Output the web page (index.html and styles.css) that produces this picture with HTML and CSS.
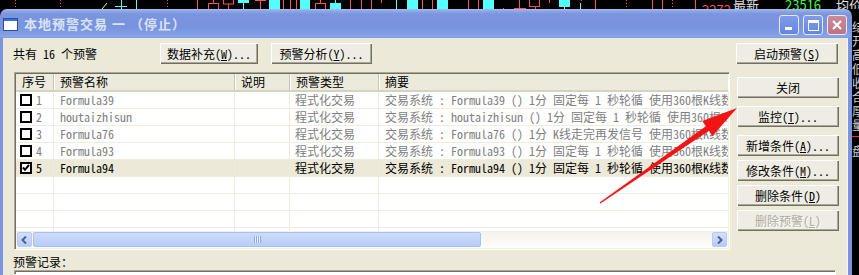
FILE: index.html
```html
<!DOCTYPE html>
<html lang="zh-CN">
<head>
    <meta charset="UTF-8">
    <title>本地预警交易</title>
    <link rel="stylesheet" href="styles.css">
</head>
<body>
    <!-- chart strip behind the dialog -->
    <svg class="chart" width="859" height="9" viewBox="0 0 859 9">
        <g class="dots" stroke="#ff5454" stroke-width="1" stroke-dasharray="1 2">
            <line x1="15.5" y1="0" x2="15.5" y2="9"/>
            <line x1="60.5" y1="0" x2="60.5" y2="9"/>
            <line x1="167.5" y1="0" x2="167.5" y2="9"/>
            <line x1="626.5" y1="0" x2="626.5" y2="9"/>
            <line x1="672.5" y1="0" x2="672.5" y2="9"/>
        </g>
        <line x1="102" y1="9" x2="107" y2="3" stroke="#ffff54"/>
        <g stroke="#54ffff" fill="#54ffff">
            <line x1="121.5" y1="0" x2="121.5" y2="9"/>
            <rect x="115" y="6" width="12" height="1" stroke="none"/>
            <line x1="136.5" y1="0" x2="136.5" y2="9"/>
            <rect x="238" y="0" width="11" height="3" stroke="none"/>
            <line x1="243.5" y1="3" x2="243.5" y2="9"/>
            <rect x="269" y="0" width="11" height="9" stroke="none"/>
            <rect x="300" y="0" width="10" height="9" stroke="none"/>
            <rect x="330" y="3" width="11" height="6" stroke="none"/>
            <line x1="335.5" y1="0" x2="335.5" y2="3"/>
            <line x1="396.5" y1="0" x2="396.5" y2="9"/>
            <rect x="407" y="0" width="11" height="9" stroke="none"/>
            <rect x="437" y="0" width="11" height="9" stroke="none"/>
            <rect x="483" y="0" width="11" height="9" stroke="none"/>
            <rect x="559" y="0" width="11" height="7" stroke="none"/>
            <line x1="564.5" y1="7" x2="564.5" y2="9"/>
            <line x1="580.5" y1="3" x2="580.5" y2="9"/>
        </g>
        <g stroke="#ff5454" fill="none">
            <line x1="197.5" y1="0" x2="197.5" y2="9"/>
            <rect x="208.5" y="3.5" width="10" height="6"/>
            <line x1="213.5" y1="0" x2="213.5" y2="3"/>
            <rect x="223.5" y="-1" width="10" height="5"/>
            <line x1="228.5" y1="4" x2="228.5" y2="9"/>
            <line x1="255" y1="0.5" x2="266" y2="0.5"/>
            <line x1="260.5" y1="0" x2="260.5" y2="9"/>
            <line x1="283.5" y1="0" x2="283.5" y2="9"/>
            <line x1="290.5" y1="0" x2="290.5" y2="9"/>
            <line x1="296.5" y1="0" x2="296.5" y2="9"/>
            <rect x="315.5" y="3.5" width="10" height="6"/>
            <line x1="320.5" y1="0" x2="320.5" y2="3"/>
            <line x1="350.5" y1="0" x2="350.5" y2="9"/>
            <line x1="361.5" y1="0" x2="361.5" y2="9"/>
            <line x1="371.5" y1="0" x2="371.5" y2="9"/>
            <line x1="381.5" y1="0" x2="381.5" y2="3"/>
            <line x1="422.5" y1="0" x2="422.5" y2="9"/>
            <line x1="432.5" y1="0" x2="432.5" y2="9"/>
            <line x1="468.5" y1="0" x2="468.5" y2="9"/>
            <line x1="478.5" y1="0" x2="478.5" y2="9"/>
            <line x1="503.5" y1="8" x2="503.5" y2="9"/>
            <line x1="514" y1="8.5" x2="526" y2="8.5"/>
            <line x1="519.5" y1="0" x2="519.5" y2="8"/>
            <rect x="529.5" y="-1" width="10" height="7.5"/>
            <line x1="535.5" y1="7" x2="535.5" y2="9"/>
            <line x1="549.5" y1="0" x2="549.5" y2="3"/>
            <line x1="581.5" y1="0" x2="581.5" y2="1"/>
            <line x1="595.5" y1="0" x2="595.5" y2="9"/>
            <line x1="652.5" y1="0" x2="652.5" y2="9"/>
            <line x1="662.5" y1="0" x2="662.5" y2="9"/>
            <line x1="695.5" y1="0" x2="695.5" y2="9"/>
        </g>
        <text x="702" y="15" class="q-red">2272</text>
        <text x="733" y="10" class="q-white">最新</text>
        <text x="785" y="10" class="q-green">23516</text>
        <text x="836" y="10" class="q-white">均价</text>
    </svg>

    <div class="screen">
        <div class="window">
            <div class="titlebar">
                <svg class="app-icon" width="15" height="13" viewBox="0 0 15 13">
                    <rect x="0.5" y="0.5" width="14" height="12" fill="#fff" stroke="#2a4ea6"/>
                    <rect x="1" y="1" width="13" height="2" fill="#3d6fd8"/>
                </svg>
                <span class="title">本地预警交易 一 （停止）</span>
                <div class="caption">
                    <span class="cap-btn cap-min"><i></i></span>
                    <span class="cap-btn cap-max"><i></i></span>
                    <span class="cap-btn cap-close">
                        <svg width="12" height="12" viewBox="0 0 12 12">
                            <path d="M2 2 L10 10 M10 2 L2 10" stroke="#fff" stroke-width="2.2"/>
                        </svg>
                    </span>
                </div>
            </div>

            <div class="client">
                <div class="toolbar">
                    <span class="count">共有 16 个预警</span>
                    <button class="btn btn-data">数据补充(<u>W</u>)...</button>
                    <button class="btn btn-analyse">预警分析(<u>Y</u>)...</button>
                    <button class="btn btn-start">启动预警(<u>S</u>)</button>
                </div>

                <div class="main">
                    <div class="list">
                        <div class="list-head">
                            <span>序号</span>
                            <span>预警名称</span>
                            <span>说明</span>
                            <span>预警类型</span>
                            <span>摘要</span>
                        </div>
                        <div class="list-body">
                            <div class="row off">
                                <span class="seq"><i class="check"></i>1</span>
                                <span>Formula39</span>
                                <span></span>
                                <span>程式化交易</span>
                                <span>交易系统 : Formula39 () 1分 固定每 1 秒轮循 使用360根K线数据</span>
                            </div>
                            <div class="row off">
                                <span class="seq"><i class="check"></i>2</span>
                                <span>houtaizhisun</span>
                                <span></span>
                                <span>程式化交易</span>
                                <span>交易系统 : houtaizhisun () 1分 固定每 1 秒轮循 使用360根K线数据</span>
                            </div>
                            <div class="row off">
                                <span class="seq"><i class="check"></i>3</span>
                                <span>Formula76</span>
                                <span></span>
                                <span>程式化交易</span>
                                <span>交易系统 : Formula76 () 1分 K线走完再发信号 使用360根K线数据</span>
                            </div>
                            <div class="row off">
                                <span class="seq"><i class="check"></i>4</span>
                                <span>Formula93</span>
                                <span></span>
                                <span>程式化交易</span>
                                <span>交易系统 : Formula93 () 1分 固定每 1 秒轮循 使用360根K线数据</span>
                            </div>
                            <div class="row selected">
                                <span class="seq"><i class="check on"></i>5</span>
                                <span>Formula94</span>
                                <span></span>
                                <span>程式化交易</span>
                                <span>交易系统 : Formula94 () 1分 固定每 1 秒轮循 使用360根K线数据</span>
                            </div>
                            <div class="row"><span></span><span></span><span></span><span></span><span></span></div>
                            <div class="row"><span></span><span></span><span></span><span></span><span></span></div>
                            <div class="row"><span></span><span></span><span></span><span></span><span></span></div>
                            <div class="row"><span></span><span></span><span></span><span></span><span></span></div>
                        </div>
                        <div class="hscroll">
                            <span class="sb-btn">
                                <svg width="7" height="8" viewBox="0 0 7 8"><path d="M5 0.5 L1.5 4 L5 7.5" fill="none" stroke="#4d6185" stroke-width="2"/></svg>
                            </span>
                            <span class="sb-thumb"><i></i></span>
                            <span class="sb-track"></span>
                            <span class="sb-btn">
                                <svg width="7" height="8" viewBox="0 0 7 8"><path d="M2 0.5 L5.5 4 L2 7.5" fill="none" stroke="#4d6185" stroke-width="2"/></svg>
                            </span>
                        </div>
                    </div>

                    <div class="side-btns">
                        <button class="btn">关闭</button>
                        <button class="btn">监控(<u>T</u>)...</button>
                        <button class="btn">新增条件(<u>A</u>)...</button>
                        <button class="btn">修改条件(<u>M</u>)...</button>
                        <button class="btn">删除条件(<u>D</u>)</button>
                        <button class="btn disabled">删除预警(<u>L</u>)</button>
                    </div>
                </div>

                <div class="log-label">预警记录：</div>
                <div class="log-box"></div>
            </div>
        </div>

        <div class="quote-side">
            <p>结</p>
            <p>开</p>
            <p>高</p>
            <p>低</p>
            <p>收</p>
            <p>合</p>
            <p>厚</p>
            <p>量</p>
            <p class="red-rule"></p>
            <p>盘</p>
        </div>
    </div>

    <!-- red annotation arrow drawn over the dialog -->
    <svg class="arrow" width="859" height="275" viewBox="0 0 859 275">
        <polygon points="599.6,202.4 705.8,126.2 702.3,121.1 737,108 712.5,135.9 709,130.8 600.4,203.6" fill="#f41414"/>
    </svg>
</body>
</html>
```

FILE: styles.css
```css
* {
    margin: 0;
    padding: 0;
    box-sizing: border-box;
}

body {
    position: relative;
    width: 859px;
    height: 275px;
    overflow: hidden;
    background-color: #000000;
    color: #000000;
    font-family: "Noto Sans Mono CJK SC", "Noto Sans CJK SC", monospace;
    font-size: 12px;
}

/* chart strip */
.chart {
    display: block;
}

.chart text {
    font-family: "Noto Sans CJK SC", sans-serif;
    font-size: 13px;
}

.q-red {
    fill: #ff5454;
}

.q-white {
    fill: #e0e0e0;
}

.q-green {
    fill: #3cff3c;
}

.screen {
    display: flex;
    height: 266px;
}

/* dialog window */
.window {
    width: 852px;
    display: flex;
    flex-direction: column;
}

.titlebar {
    height: 29px;
    display: flex;
    align-items: center;
    padding: 0 5px 0 3px;
    border-radius: 7px 7px 0 0;
    background: linear-gradient(#a9bcef 0, #8ea7e6 2px, #7b96df 5px, #7893dd 18px, #819ee5 25px, #8aa6ea 28px, #7590dc 29px);
}

.app-icon {
    display: block;
    margin-top: 2px;
}

.title {
    margin-left: 6px;
    color: #d9e3f8;
    font-family: "Noto Sans CJK SC", sans-serif;
    font-weight: bold;
    font-size: 13px;
    letter-spacing: 1px;
}

.caption {
    display: flex;
    gap: 4px;
    margin-left: auto;
    margin-top: 3px;
}

.cap-btn {
    position: relative;
    display: flex;
    justify-content: center;
    align-items: center;
    width: 20px;
    height: 20px;
    border: 1px solid #e4ebfb;
    border-radius: 3px;
    background: linear-gradient(#7f9be8, #6687e0);
}

.cap-min i {
    position: absolute;
    left: 5px;
    bottom: 4px;
    width: 7px;
    height: 3px;
    background-color: #ffffff;
}

.cap-max i {
    width: 11px;
    height: 11px;
    border: 1px solid #ffffff;
    border-top-width: 3px;
}

.cap-close {
    background: linear-gradient(#cc8a99, #bf7385);
}

.cap-close svg {
    display: block;
}

.client {
    flex: 1;
    display: flex;
    flex-direction: column;
    padding-top: 5px;
    background-color: #ece9d8;
    border-left: 3px solid #7a95de;
    border-right: 4px solid #7a95de;
    box-shadow: inset -1px 0 #f6f4ec;
}

.toolbar {
    display: flex;
    align-items: center;
    height: 21px;
    padding: 0 10px;
}

.count {
    width: 147px;
    line-height: 21px;
}

.btn {
    height: 21px;
    border: none;
    background-color: #efede3;
    color: #000000;
    font-family: inherit;
    font-size: 12px;
    text-align: center;
    box-shadow: inset 1px 1px #ffffff, inset -1px -1px #716f64, inset -2px -2px #aca899;
}

.btn u {
    text-underline-offset: 1px;
}

.btn-data {
    width: 98px;
}

.btn-analyse {
    width: 101px;
    margin-left: 13px;
}

.btn-start {
    width: 102px;
    margin-left: auto;
}

.btn.disabled {
    color: #aca899;
    text-shadow: 1px 1px #ffffff;
}

/* list view */
.main {
    display: flex;
    margin-top: 8px;
    padding-left: 11px;
}

.list {
    width: 716px;
    height: 178px;
    display: flex;
    flex-direction: column;
    border: 1px solid;
    border-color: #aca899 #ffffff #ffffff #aca899;
    box-shadow: inset 1px 1px #716f64, inset -1px -1px #f1efe2;
    padding: 1px;
    background-color: #ffffff;
}

.list-head,
.row {
    display: grid;
    grid-template-columns: 38px 181px 55px 89px 1fr;
}

.list-head {
    height: 18px;
    background-color: #ebeadb;
    border-bottom: 2px solid #d6d2c2;
}

.list-head span {
    padding-left: 6px;
    line-height: 16px;
    white-space: nowrap;
    border-right: 1px solid #c7c5b2;
    box-shadow: 1px 0 #ffffff;
}

.list-head span:last-child {
    border-right: none;
}

.list-body {
    height: 139px;
    overflow: hidden;
}

.row {
    height: 17px;
    border-bottom: 1px solid #eeecdf;
}

.row span {
    padding-left: 6px;
    line-height: 16px;
    white-space: nowrap;
    overflow: hidden;
    border-right: 1px solid #eeecdf;
}

.row span:nth-child(4) {
    padding-left: 5px;
}

.row span:last-child {
    border-right: none;
}

.row .seq {
    display: flex;
    align-items: center;
    padding-left: 4px;
}

.check {
    width: 12px;
    height: 12px;
    margin-right: 4px;
    border: 2px solid #000000;
    background-color: #ffffff;
}

.check.on {
    background: #ffffff url("data:image/svg+xml,%3Csvg xmlns='http://www.w3.org/2000/svg' width='8' height='8'%3E%3Cpath d='M1 3.5 L3 5.8 L7 1' fill='none' stroke='%23000' stroke-width='2'/%3E%3C/svg%3E") center no-repeat;
}

.row.off {
    color: #808080;
}

.row.selected {
    background-color: #ece9d8;
}

.hscroll {
    display: flex;
    align-items: center;
    height: 17px;
    padding: 0 1px;
    background: linear-gradient(#f3f1ea, #fefefb);
}

.sb-btn {
    display: flex;
    justify-content: center;
    align-items: center;
    width: 15px;
    height: 15px;
    border: 1px solid #b7c9f4;
    border-radius: 2px;
    background: linear-gradient(#d2defd, #b8cbf7);
}

.sb-thumb {
    display: flex;
    justify-content: center;
    align-items: center;
    width: 448px;
    height: 15px;
    margin-left: 1px;
    border: 1px solid #a9bff3;
    border-radius: 2px;
    background: linear-gradient(#cddcfc, #b9cdf8);
}

.sb-thumb i {
    width: 7px;
    height: 7px;
    background: repeating-linear-gradient(90deg, #8ea8e6 0, #8ea8e6 1px, #eef3fe 1px, #eef3fe 2px);
}

.sb-track {
    flex: 1;
}

.side-btns {
    display: flex;
    flex-direction: column;
    width: 102px;
    margin-left: 7px;
    padding-top: 5px;
}

.side-btns .btn {
    margin-top: 4px;
}

.side-btns .btn:first-child {
    margin-top: 0;
}

.side-btns .btn:nth-child(2),
.side-btns .btn:nth-child(3) {
    margin-top: 8px;
}

.log-label {
    margin-top: 4px;
    padding-left: 10px;
    height: 16px;
    line-height: 16px;
}

.log-box {
    flex: 1;
    width: 822px;
    margin-left: 11px;
    border: 1px solid;
    border-color: #aca899 #ffffff #ffffff #aca899;
    box-shadow: inset 1px 1px #716f64;
    background-color: #ffffff;
}

/* quote panel at the right edge */
.quote-side {
    flex: 1;
    overflow: hidden;
    padding-top: 11px;
    color: #d0d0d0;
    font-family: "Noto Sans CJK SC", sans-serif;
    font-size: 12px;
    line-height: 14px;
    white-space: nowrap;
}

.quote-side .red-rule {
    height: 8px;
    border-top: 1px solid #ff3030;
    margin-top: 4px;
}

.arrow {
    position: absolute;
    left: 0;
    top: 0;
    pointer-events: none;
}
```
